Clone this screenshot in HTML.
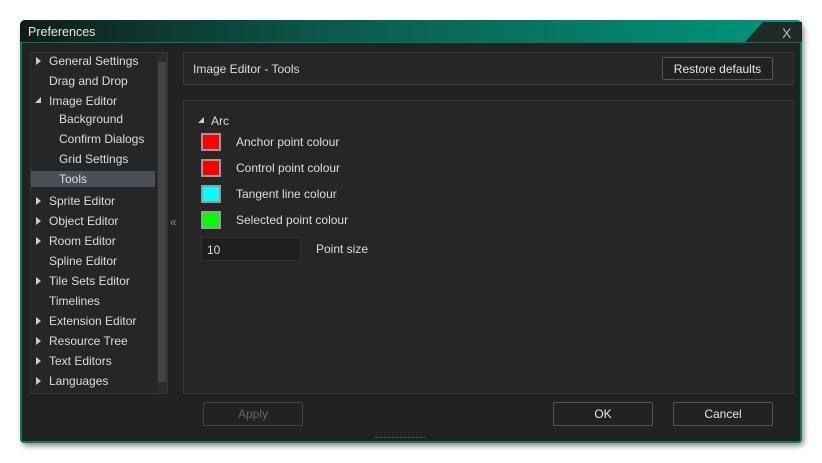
<!DOCTYPE html><html><head><style>
body{margin:0;width:822px;height:463px;background:#fff;position:relative;font-family:"Liberation Sans",sans-serif;font-size:12px;color:#ddd;overflow:hidden}
.a{position:absolute}
.win{left:20px;top:20px;width:782px;height:422px;border-radius:5px;background:#222;box-shadow:2px 4px 6px rgba(0,0,0,.45)}
.title{left:20px;top:20px;width:782px;height:22px;border-radius:5px 5px 0 0;background:linear-gradient(90deg,#101c1a 0%,#0b5a4c 40%,#00987e 100%)}
.body{left:20px;top:42px;width:778px;height:398px;border:2px solid #0a7a5c;border-top:1px solid #0a7a5c;border-radius:0 0 4px 4px;background:#222}
.panel{background:#262626;border:1px solid #383838;box-sizing:border-box}
.btn{border:1px solid #555;border-radius:2px;box-sizing:border-box;text-align:center;line-height:22px;color:#e6e6e6;background:#222}
.tr{position:absolute;left:49px;height:20px;line-height:19px}
.sub{left:59px}
.arr{position:absolute;left:36px;width:0;height:0;border-left:5px solid #ccc;border-top:4px solid transparent;border-bottom:4px solid transparent}
.sw{position:absolute;left:201px;width:20px;height:18px;border:2px solid #999;box-sizing:border-box}
.lab{position:absolute;left:236px}
</style></head><body>
<div class="a win"></div>
<div class="a title"></div>
<div class="a" style="left:745px;top:22px;width:57px;height:20px;background:#1e2a28;clip-path:polygon(18px 0,100% 0,100% 100%,0 100%)"></div>
<div class="a" style="left:28px;top:25px;color:#e8e8e8;font-size:12.5px">Preferences</div>
<div class="a" style="left:782px;top:25px;color:#bbb;font-size:14px">X</div>
<div class="a body"></div>
<div class="a panel" style="left:30px;top:52px;width:138px;height:342px"></div>
<div class="a" style="left:157px;top:53px;width:10px;height:340px;background:#2c2c2c"></div>
<div class="a" style="left:158px;top:62px;width:8px;height:320px;background:#444"></div>
<div class="a" style="left:31px;top:171px;width:124px;height:16px;background:#4a4f58"></div>
<div class="arr" style="top:57px"></div><div class="tr" style="top:52px">General Settings</div>
<div class="tr" style="top:72px">Drag and Drop</div>
<div class="a" style="left:35px;top:97px;border-right:6px solid #ccc;border-top:6px solid transparent"></div><div class="tr" style="top:92px">Image Editor</div>
<div class="tr sub" style="top:110px">Background</div>
<div class="tr sub" style="top:130px">Confirm Dialogs</div>
<div class="tr sub" style="top:150px">Grid Settings</div>
<div class="tr sub" style="top:170px">Tools</div>
<div class="arr" style="top:197px"></div><div class="tr" style="top:192px">Sprite Editor</div>
<div class="arr" style="top:217px"></div><div class="tr" style="top:212px">Object Editor</div>
<div class="arr" style="top:237px"></div><div class="tr" style="top:232px">Room Editor</div>
<div class="tr" style="top:252px">Spline Editor</div>
<div class="arr" style="top:277px"></div><div class="tr" style="top:272px">Tile Sets Editor</div>
<div class="tr" style="top:292px">Timelines</div>
<div class="arr" style="top:317px"></div><div class="tr" style="top:312px">Extension Editor</div>
<div class="arr" style="top:337px"></div><div class="tr" style="top:332px">Resource Tree</div>
<div class="arr" style="top:357px"></div><div class="tr" style="top:352px">Text Editors</div>
<div class="arr" style="top:377px"></div><div class="tr" style="top:372px">Languages</div>
<div class="a" style="left:170px;top:215px;color:#888;font-size:12px">«</div>
<div class="a panel" style="left:183px;top:52px;width:611px;height:33px"></div>
<div class="a" style="left:193px;top:62px">Image Editor - Tools</div>
<div class="a btn" style="left:662px;top:57px;width:111px;height:23px">Restore defaults</div>
<div class="a panel" style="left:183px;top:100px;width:611px;height:294px"></div>
<div class="a" style="left:198px;top:117px;border-right:6px solid #ccc;border-top:6px solid transparent"></div>
<div class="a" style="left:211px;top:114px">Arc</div>
<div class="sw" style="top:133px;background:#f00"></div><div class="lab" style="top:135px">Anchor point colour</div>
<div class="sw" style="top:159px;background:#f00"></div><div class="lab" style="top:161px">Control point colour</div>
<div class="sw" style="top:185px;background:#0ff"></div><div class="lab" style="top:187px">Tangent line colour</div>
<div class="sw" style="top:211px;background:#0f0"></div><div class="lab" style="top:213px">Selected point colour</div>
<div class="a" style="left:201px;top:237px;width:100px;height:24px;background:#1e1e1e;border:1px solid #333;box-sizing:border-box;padding:5px 5px">10</div>
<div class="a" style="left:316px;top:242px">Point size</div>
<div class="a btn" style="left:203px;top:402px;width:100px;height:24px;color:#666;border-color:#444">Apply</div>
<div class="a btn" style="left:553px;top:402px;width:100px;height:24px">OK</div>
<div class="a btn" style="left:673px;top:402px;width:100px;height:24px">Cancel</div>
<div class="a" style="left:375px;top:437px;width:50px;height:2px;border-top:1px dotted #666"></div>
</body></html>
